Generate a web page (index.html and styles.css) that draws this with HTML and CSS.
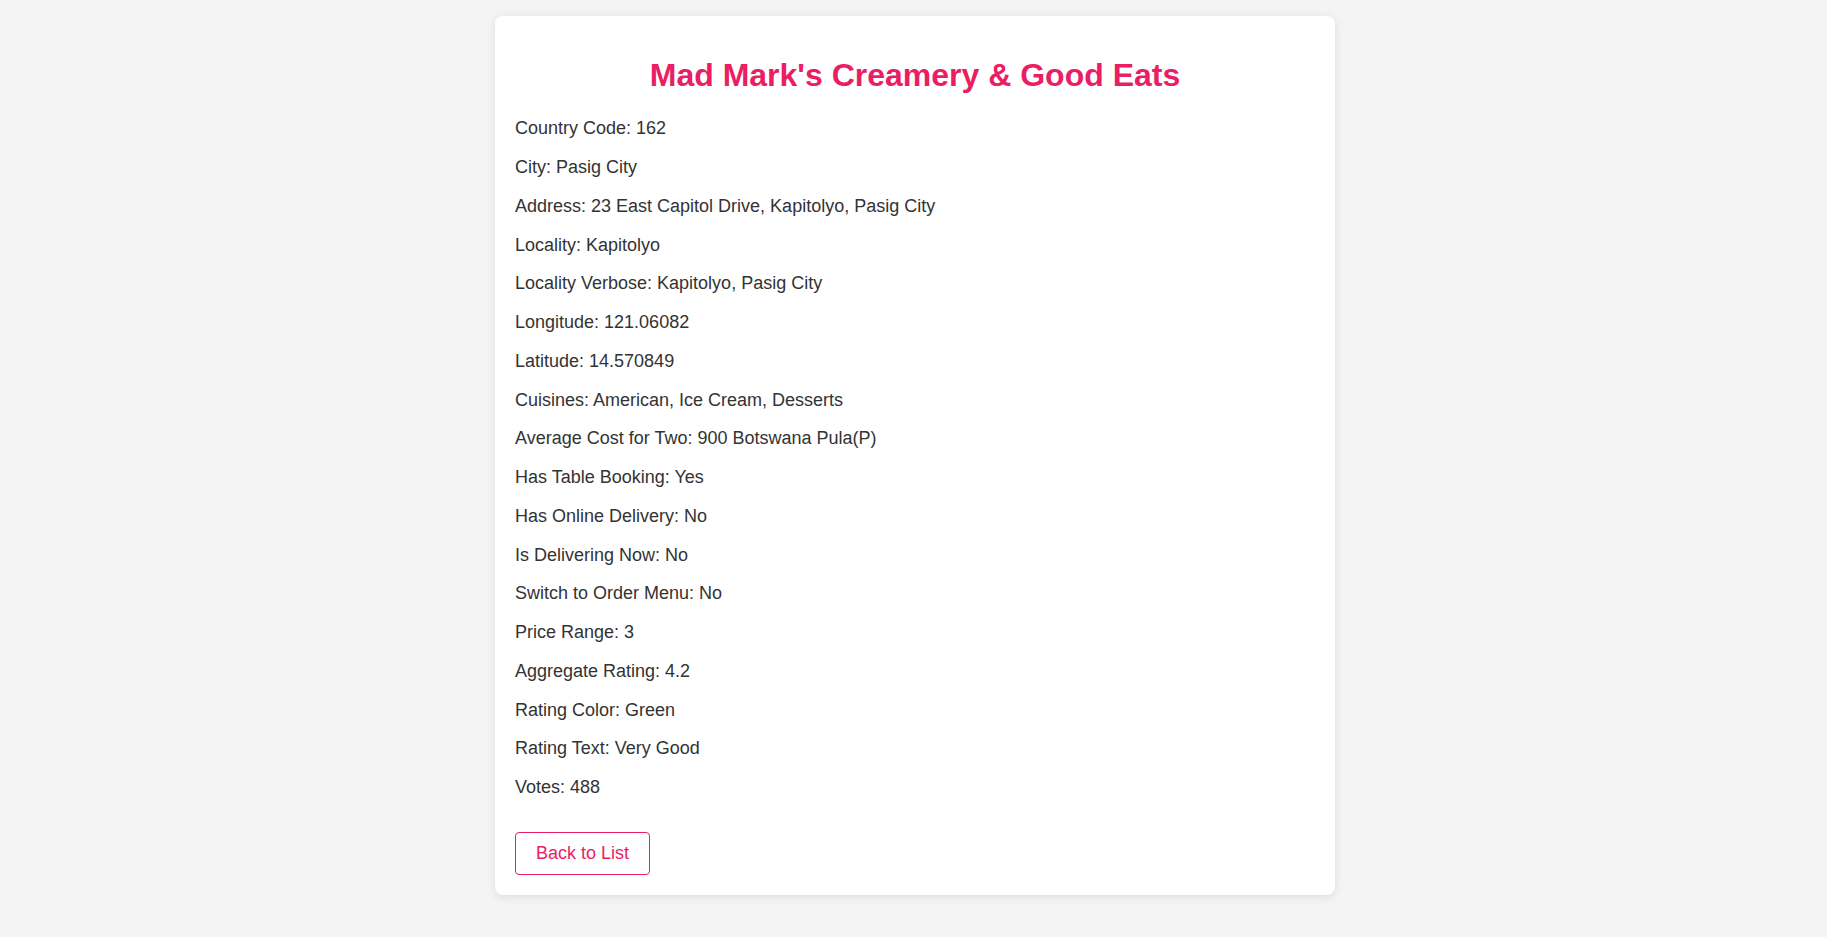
FILE: index.html
```html
<!DOCTYPE html>
<html lang="en">
<head>
<meta charset="utf-8">
<title>Mad Mark's Creamery &amp; Good Eats</title>
<link rel="stylesheet" href="styles.css">
</head>
<body>
<main class="card">
  <h1 class="title">Mad Mark's Creamery &amp; Good Eats</h1>
  <p class="field">Country Code: 162</p>
  <p class="field">City: Pasig City</p>
  <p class="field">Address: 23 East Capitol Drive, Kapitolyo, Pasig City</p>
  <p class="field">Locality: Kapitolyo</p>
  <p class="field">Locality Verbose: Kapitolyo, Pasig City</p>
  <p class="field">Longitude: 121.06082</p>
  <p class="field">Latitude: 14.570849</p>
  <p class="field">Cuisines: American, Ice Cream, Desserts</p>
  <p class="field">Average Cost for Two: 900 Botswana Pula(P)</p>
  <p class="field">Has Table Booking: Yes</p>
  <p class="field">Has Online Delivery: No</p>
  <p class="field">Is Delivering Now: No</p>
  <p class="field">Switch to Order Menu: No</p>
  <p class="field">Price Range: 3</p>
  <p class="field">Aggregate Rating: 4.2</p>
  <p class="field">Rating Color: Green</p>
  <p class="field">Rating Text: Very Good</p>
  <p class="field">Votes: 488</p>
  <div class="actions">
    <button class="back-btn" type="button">Back to List</button>
  </div>
</main>
</body>
</html>
```

FILE: styles.css
```css
html, body {
  margin: 0;
  padding: 0;
}
body {
  background: #f4f4f4;
  font-family: "Liberation Sans", Arial, sans-serif;
  color: #333;
  padding: 16px 0 16px 3px;
}
.card {
  display: block;
  box-sizing: border-box;
  width: 840px;
  margin: 0 auto;
  padding: 20px;
  background: #fff;
  border-radius: 8px;
  box-shadow: 0 2px 10px rgba(0, 0, 0, 0.1);
}
.title {
  font-size: 32px;
  font-weight: bold;
  line-height: normal;
  color: #e91e63;
  text-align: center;
  margin: 21.44px 0 20px;
}
.field {
  font-size: 18px;
  line-height: 28.75px;
  margin: 10px 0;
}
.actions {
  display: flex;
  padding-top: 20.5px;
}
.back-btn {
  display: block;
  margin: 0;
  padding: 10px 20px;
  font-family: "Liberation Sans", Arial, sans-serif;
  font-size: 18px;
  line-height: normal;
  color: #e91e63;
  background: #fff;
  border: 1px solid #e91e63;
  border-radius: 4px;
  cursor: pointer;
}
```
